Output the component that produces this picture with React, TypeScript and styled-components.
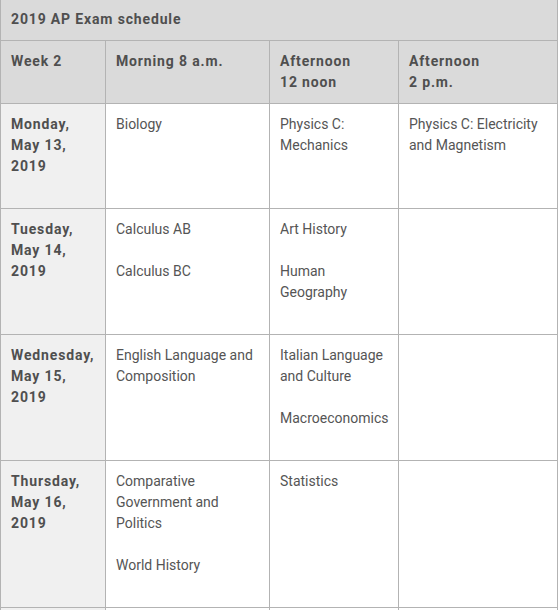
import React from "react";
import styled, { createGlobalStyle } from "styled-components";

const GlobalStyle = createGlobalStyle`
  html, body {
    margin: 0;
    padding: 0;
    background: #ffffff;
  }
  body {
    font-family: Roboto, "Liberation Sans", Arial, sans-serif;
    font-size: 14px;
    line-height: 21px;
    color: #555555;
  }
`;

const Table = styled.div`
  width: 558px;
  box-sizing: border-box;
  border-left: 1px solid #b3b3b3;
`;

const Caption = styled.div`
  box-sizing: border-box;
  height: 41px;
  padding: 9px 10px 10px;
  background: #dadada;
  border-right: 1px solid #b3b3b3;
  border-bottom: 1px solid #b3b3b3;
  font-weight: 700;
  letter-spacing: 0.85px;
  color: #4f4f4f;
`;

const Grid = styled.div`
  display: grid;
  grid-template-columns: 105px 164px 129px 159px;
`;

const Cell = styled.div<{ $variant: "head" | "day" | "body" }>`
  box-sizing: border-box;
  padding: 10px 10px 10px;
  border-right: 1px solid #b3b3b3;
  border-bottom: 1px solid #b3b3b3;
  background: ${(p) =>
    p.$variant === "head" ? "#dadada" : p.$variant === "day" ? "#f0f0f0" : "#ffffff"};
  font-weight: ${(p) => (p.$variant === "body" ? 400 : 700)};
  letter-spacing: ${(p) => (p.$variant === "body" ? "0" : "0.85px")};
  color: ${(p) => (p.$variant === "body" ? "#555555" : "#4f4f4f")};
`;

const Para = styled.p`
  margin: 0 0 21px;
`;

const Line = styled.span`
  display: block;
`;

type Row = { day: string[]; slots: string[][] };

const headers: string[][] = [
  ["Week 2"],
  ["Morning 8 a.m."],
  ["Afternoon", "12 noon"],
  ["Afternoon", "2 p.m."],
];

const rows: Row[] = [
  {
    day: ["Monday,", "May 13,", "2019"],
    slots: [["Biology"], ["Physics C: Mechanics"], ["Physics C: Electricity and Magnetism"]],
  },
  {
    day: ["Tuesday,", "May 14,", "2019"],
    slots: [["Calculus AB", "Calculus BC"], ["Art History", "Human Geography"], []],
  },
  {
    day: ["Wednesday,", "May 15,", "2019"],
    slots: [["English Language and Composition"], ["Italian Language and Culture", "Macroeconomics"], []],
  },
  {
    day: ["Thursday,", "May 16,", "2019"],
    slots: [["Comparative Government and Politics", "World History"], ["Statistics"], []],
  },
  {
    day: ["Friday,", "May 17,", "2019"],
    slots: [["Computer Science A", "Spanish Literature and Culture"], ["Latin", "Physics 1: Algebra-Based"], []],
  },
];

export default function App() {
  return (
    <>
      <GlobalStyle />
      <Table>
        <Caption>2019 AP Exam schedule</Caption>
        <Grid>
          {headers.map((h, i) => (
            <Cell key={`h${i}`} $variant="head">
              {h.map((l) => (
                <Line key={l}>{l}</Line>
              ))}
            </Cell>
          ))}
          {rows.map((r) => (
            <React.Fragment key={r.day.join(" ")}>
              <Cell $variant="day">
                <Para>
                  {r.day.map((l) => (
                    <Line key={l}>{l}</Line>
                  ))}
                </Para>
              </Cell>
              {r.slots.map((s, i) => (
                <Cell key={i} $variant="body">
                  {s.map((exam) => (
                    <Para key={exam}>{exam}</Para>
                  ))}
                </Cell>
              ))}
            </React.Fragment>
          ))}
        </Grid>
      </Table>
    </>
  );
}
